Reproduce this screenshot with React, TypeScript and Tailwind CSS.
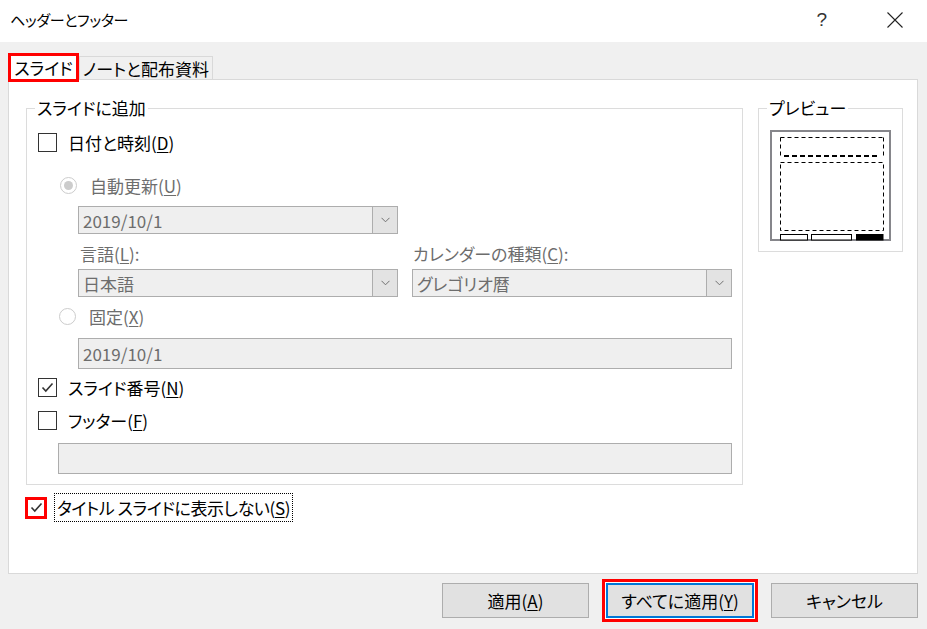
import React from 'react';

function CheckBox({ checked }: { checked?: boolean }) {
  return (
    <div className="w-[19px] h-[19px] border border-[#333333] bg-white flex items-center justify-center shrink-0">
      {checked && (
        <svg width="13" height="11" viewBox="0 0 13 11">
          <polyline points="1.5,5.5 4.8,9 11.5,1.5" fill="none" stroke="#333333" strokeWidth="1.6" />
        </svg>
      )}
    </div>
  );
}

function Radio({ checked }: { checked?: boolean }) {
  return (
    <div className="w-[17px] h-[17px] rounded-full border border-[#cccccc] bg-white flex items-center justify-center shrink-0">
      {checked && <div className="w-[9px] h-[9px] rounded-full bg-[#cccccc]" />}
    </div>
  );
}

function Select({ value }: { value: string }) {
  return (
    <div className="h-[28px] border border-[#adadad] bg-[#efefef] flex items-stretch">
      <div className="flex-1 flex items-center pl-[4px] text-[#6d6d6d]">{value}</div>
      <div className="w-[25px] border-l border-[#adadad] bg-[#e3e3e3] flex items-center justify-center">
        <svg width="9" height="6" viewBox="0 0 9 6">
          <polyline points="0.5,0.8 4.5,4.8 8.5,0.8" fill="none" stroke="#707070" strokeWidth="1" />
        </svg>
      </div>
    </div>
  );
}

function Preview() {
  return (
    <svg width="121" height="111" viewBox="0 0 121 111">
      <rect x="1" y="1" width="119" height="109" fill="white" stroke="#86868b" strokeWidth="2" />
      {/* header area */}
      <path d="M10.5 7.5 H113.5 M10.5 7.5 V26 M113.5 7.5 V26" stroke="black" strokeWidth="1" strokeDasharray="4 3" fill="none" />
      <path d="M14 26 H110" stroke="black" strokeWidth="2" strokeDasharray="5 3" fill="none" />
      {/* body area */}
      <rect x="10.5" y="32.5" width="103" height="68" fill="none" stroke="black" strokeWidth="1" strokeDasharray="4 3" />
      {/* footer placeholders */}
      <rect x="10.5" y="104.5" width="27" height="5.5" fill="white" stroke="black" strokeWidth="1" />
      <rect x="41.5" y="104.5" width="40" height="5.5" fill="white" stroke="black" strokeWidth="1" />
      <rect x="86" y="104" width="27.5" height="6.5" fill="black" />
    </svg>
  );
}

export default function App() {
  return (
    <div className="w-[927px] h-[629px] bg-[#f0f0f0] flex flex-col overflow-hidden text-black text-[17px] leading-none font-['Noto_Sans_CJK_JP','Noto_Sans',sans-serif] [font-feature-settings:'palt']">
      {/* title bar */}
      <div className="h-[42px] bg-white flex items-center pl-[10px] shrink-0">
        <span className="text-[15px] pb-[3px] tracking-[-0.3px]">ヘッダーとフッター</span>
        <span className="ml-auto text-[19px] text-[#333333] pb-[3px] font-['Liberation_Sans',sans-serif]">?</span>
        <svg className="ml-[60px] mr-[24px] mb-[3px]" width="16" height="16" viewBox="0 0 16 16">
          <path d="M0.5 0.5 L15.5 15.5 M15.5 0.5 L0.5 15.5" stroke="#222222" strokeWidth="1.1" fill="none" />
        </svg>
      </div>

      <div className="flex-1 flex flex-col pl-[8px] pr-[9px] pt-[11px]">
        {/* tabs */}
        <div className="h-[26px] flex items-start">
          <div className="relative z-10 w-[71px] h-[29px] border-[3px] border-[#ff0000] bg-white flex items-center justify-center pb-[1px]">
            スライド
          </div>
          <div className="mt-[3px] w-[134px] h-[23px] border border-b-0 border-[#d9d9d9] bg-[#f0f0f0] flex items-center justify-center">
            ノートと配布資料
          </div>
        </div>

        {/* panel */}
        <div className="h-[495px] bg-white border border-[#d9d9d9] flex gap-[15px] pl-[17px] pt-[28px]">
          <div className="flex flex-col">
            {/* group box */}
            <div className="relative w-[717px] h-[377px] border border-[#dcdcdc] flex flex-col pl-[11px] pt-[23px]">
              <span className="absolute -top-[10px] left-[8px] bg-white px-[2px]">スライドに追加</span>

              <div className="h-[20px] flex items-center gap-[11px]">
                <CheckBox />
                <span>日付と時刻(<u className="underline-offset-2">D</u>)</span>
              </div>

              <div className="mt-[23px] h-[20px] flex items-center gap-[13px] pl-[22px] text-[#6d6d6d]">
                <Radio checked />
                <span>自動更新(<u className="underline-offset-2">U</u>)</span>
              </div>

              <div className="mt-[11px] ml-[40px] w-[320px]">
                <Select value="2019/10/1" />
              </div>

              <div className="mt-[9px] ml-[40px] w-[654px] h-[20px] grid grid-cols-2 gap-x-[14px] items-center text-[#6d6d6d]">
                <span className="pl-[2px]">言語(<u className="underline-offset-2">L</u>):</span>
                <span className="pl-[1px]">カレンダーの種類(<u className="underline-offset-2">C</u>):</span>
              </div>

              <div className="mt-[6px] ml-[40px] w-[654px] grid grid-cols-2 gap-x-[14px]">
                <Select value="日本語" />
                <Select value="グレゴリオ暦" />
              </div>

              <div className="mt-[9px] h-[20px] flex items-center gap-[13px] pl-[21px] text-[#6d6d6d]">
                <Radio />
                <span>固定(<u className="underline-offset-2">X</u>)</span>
              </div>

              <div className="mt-[12px] ml-[40px] w-[654px] h-[31px] border border-[#adadad] bg-[#efefef] flex items-center pl-[4px] text-[#6d6d6d]">
                2019/10/1
              </div>

              <div className="mt-[8px] h-[20px] flex items-center gap-[11px]">
                <CheckBox checked />
                <span>スライド番号(<u className="underline-offset-2">N</u>)</span>
              </div>

              <div className="mt-[13px] h-[20px] flex items-center gap-[11px]">
                <CheckBox />
                <span>フッター(<u className="underline-offset-2">F</u>)</span>
              </div>

              <div className="mt-[13px] ml-[20px] w-[674px] h-[31px] border border-[#adadad] bg-[#efefef]" />
            </div>

            {/* title slide option */}
            <div className="mt-[8px] -ml-[1px] flex items-center gap-[7px]">
              <div className="w-[22px] h-[22px] border-[3px] border-[#ff0000] bg-white flex items-center justify-center">
                <svg width="13" height="11" viewBox="0 0 13 11">
                  <polyline points="1.5,5.5 4.8,9 11.5,1.5" fill="none" stroke="#333333" strokeWidth="1.6" />
                </svg>
              </div>
              <div className="h-[29px] border border-dotted border-black flex items-center px-[2px] tracking-[-0.4px]">
                タイトル スライドに表示しない(<u className="underline-offset-2">S</u>)
              </div>
            </div>
          </div>

          {/* preview group */}
          <div className="relative w-[145px] h-[144px] border border-[#dcdcdc] pl-[11px] pt-[21px]">
            <span className="absolute -top-[10px] left-[8px] bg-white px-[2px]">プレビュー</span>
            <Preview />
          </div>
        </div>

        {/* buttons */}
        <div className="mt-[5px] flex items-center justify-end gap-[13px]">
          <button className="w-[147px] h-[35px] bg-[#e1e1e1] border border-[#adadad] flex items-center justify-center">
            適用(<u className="underline-offset-2">A</u>)
          </button>
          <div className="border-[3px] border-[#ff0000] bg-white p-[1px]">
            <button className="w-[148px] h-[35px] bg-[#e1e1e1] border-2 border-[#0078d7] flex items-center justify-center">
              すべてに適用(<u className="underline-offset-2">Y</u>)
            </button>
          </div>
          <button className="w-[147px] h-[35px] bg-[#e1e1e1] border border-[#adadad] flex items-center justify-center">
            キャンセル
          </button>
        </div>
      </div>
    </div>
  );
}
